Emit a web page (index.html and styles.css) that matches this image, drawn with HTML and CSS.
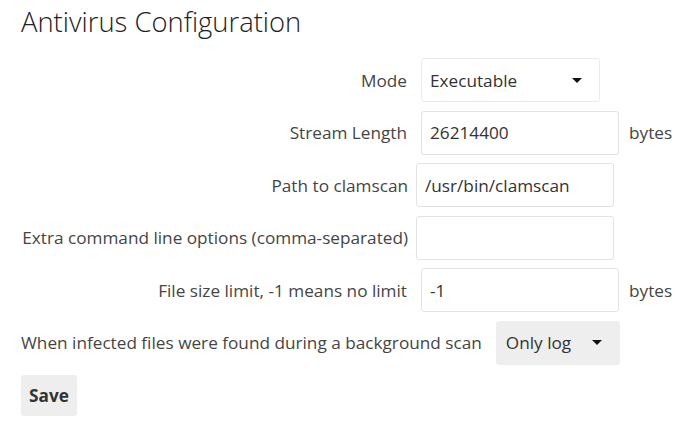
FILE: index.html
```html
<!DOCTYPE html>
<html>
<head>
<meta charset="utf-8">
<link rel="stylesheet" href="styles.css">
</head>
<body>
<div class="section">
  <h2 class="title">Antivirus Configuration</h2>
  <form class="form">
    <div class="row">
      <label class="label">Mode</label>
      <div class="select select-white">
        <span class="select-text">Executable</span>
        <span class="caret"></span>
      </div>
    </div>
    <div class="row">
      <label class="label">Stream Length</label>
      <input class="input" type="text" value="26214400">
      <span class="unit">bytes</span>
    </div>
    <div class="row row-tight">
      <label class="label">Path to clamscan</label>
      <input class="input" type="text" value="/usr/bin/clamscan">
    </div>
    <div class="row row-tight">
      <label class="label">Extra command line options (comma-separated)</label>
      <input class="input" type="text" value="">
    </div>
    <div class="row">
      <label class="label">File size limit, -1 means no limit</label>
      <input class="input" type="text" value="-1">
      <span class="unit">bytes</span>
    </div>
    <div class="row">
      <label class="label label-free">When infected files were found during a background scan</label>
      <div class="select select-grey">
        <span class="select-text">Only log</span>
        <span class="caret"></span>
      </div>
    </div>
    <div class="row">
      <button class="button" type="button">Save</button>
    </div>
  </form>
</div>
</body>
</html>
```
FILE: styles.css
```css
html, body {
  margin: 0;
  padding: 0;
  background: #fff;
}
body {
  font-family: "Open Sans", "Liberation Sans", sans-serif;
  color: #454545;
}
.section {
  padding: 5px 0 0 21px;
}
.title {
  margin: 0 0 19px 0;
  font-size: 27.4px;
  line-height: 34px;
  font-weight: 300;
  color: #222;
}
.form {
  display: flex;
  flex-direction: column;
  gap: 8.6px;
}
.row {
  display: flex;
  align-items: center;
  height: 44px;
  gap: 14px;
}
.row-tight {
  gap: 8px;
}
.label {
  box-sizing: border-box;
  width: 386px;
  flex: 0 0 auto;
  text-align: right;
  font-size: 17.2px;
  white-space: nowrap;
}
.row-tight .label {
  min-width: 387px;
  width: auto;
}
.label-free {
  width: auto;
}
.input {
  box-sizing: border-box;
  width: 198px;
  height: 44px;
  margin: 0;
  padding: 0 8px;
  border: 1px solid #e3e3e3;
  border-radius: 3px;
  font-family: "Open Sans", "Liberation Sans", sans-serif;
  font-size: 17.2px;
  color: #333;
  background: #fff;
  outline: none;
}
.unit {
  font-size: 17.2px;
  margin-left: -4px;
}
.select {
  box-sizing: border-box;
  height: 44px;
  display: flex;
  align-items: center;
  justify-content: space-between;
  padding: 0 17px 0 8px;
  border-radius: 3px;
  font-size: 17.2px;
  color: #333;
}
.select-white {
  width: 179px;
  border: 1px solid #ebebeb;
  background: #fff;
}
.select-grey {
  width: 124px;
  border: 1px solid #ededed;
  background: #eeeeee;
  padding-left: 9px;
  padding-right: 17px;
}
.caret {
  width: 0;
  height: 0;
  border-left: 5px solid transparent;
  border-right: 5px solid transparent;
  border-top: 5px solid #111;
}
.button {
  box-sizing: border-box;
  width: 56px;
  height: 41px;
  margin: 0;
  padding: 0;
  border: 1px solid #ededed;
  border-radius: 3px;
  background: #eeeeee;
  font-family: "Open Sans", "Liberation Sans", sans-serif;
  font-size: 17.2px;
  font-weight: 700;
  color: #333;
}
```
